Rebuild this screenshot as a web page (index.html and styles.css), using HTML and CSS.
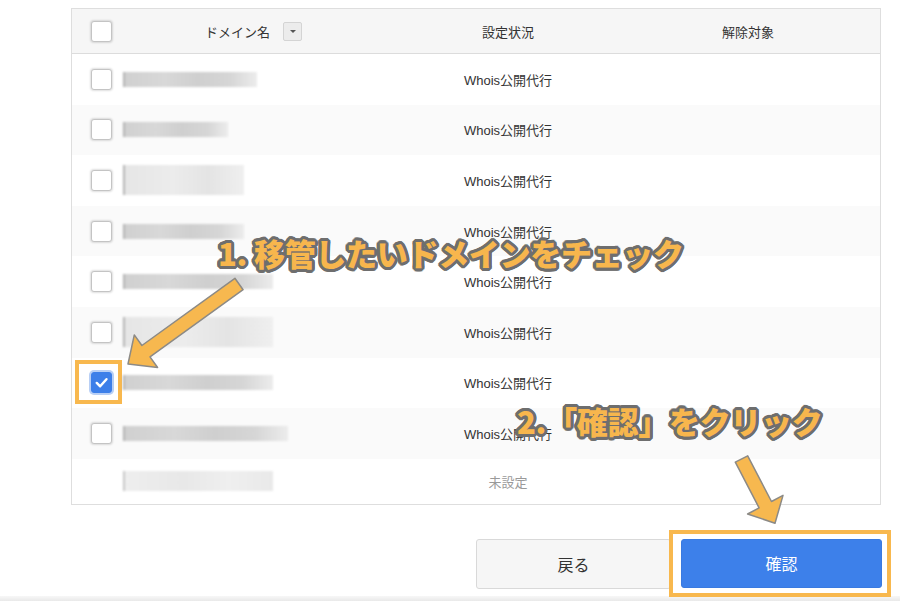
FILE: index.html
```html
<!DOCTYPE html>
<html lang="ja">
<head>
<meta charset="utf-8">
<title>ドメイン移管</title>
<link rel="stylesheet" href="styles.css">
</head>
<body>
<div class="page">
  <div class="table">
    <div class="row head">
      <div class="cell name"><span class="cb"></span><span class="label">ドメイン名</span><span class="sort"></span></div>
      <div class="cell">設定状況</div>
      <div class="cell">解除対象</div>
    </div>
    <div class="row">
      <div class="cell name"><span class="cb"></span><span class="bar b1"></span></div>
      <div class="cell">Whois公開代行</div>
      <div class="cell"></div>
    </div>
    <div class="row alt">
      <div class="cell name"><span class="cb"></span><span class="bar b2"></span></div>
      <div class="cell">Whois公開代行</div>
      <div class="cell"></div>
    </div>
    <div class="row">
      <div class="cell name"><span class="cb"></span><span class="bar b3 tall"></span></div>
      <div class="cell">Whois公開代行</div>
      <div class="cell"></div>
    </div>
    <div class="row alt">
      <div class="cell name"><span class="cb"></span><span class="bar b3"></span></div>
      <div class="cell">Whois公開代行</div>
      <div class="cell"></div>
    </div>
    <div class="row">
      <div class="cell name"><span class="cb"></span><span class="bar b5"></span></div>
      <div class="cell">Whois公開代行</div>
      <div class="cell"></div>
    </div>
    <div class="row alt">
      <div class="cell name"><span class="cb"></span><span class="bar b5 tall"></span></div>
      <div class="cell">Whois公開代行</div>
      <div class="cell"></div>
    </div>
    <div class="row">
      <div class="cell name"><span class="cb checked"><svg viewBox="0 0 20 20" class="tick"><path d="M5 10.5 L8.6 14 L15.2 6.6" /></svg><span class="hl-box"></span></span><span class="bar b5"></span></div>
      <div class="cell">Whois公開代行</div>
      <div class="cell"></div>
    </div>
    <div class="row alt">
      <div class="cell name"><span class="cb"></span><span class="bar b8"></span></div>
      <div class="cell">Whois公開代行</div>
      <div class="cell"></div>
    </div>
    <div class="row last">
      <div class="cell name"><span class="cb-space"></span><span class="bar b5 light"></span></div>
      <div class="cell muted">未設定</div>
      <div class="cell"></div>
    </div>
  </div>

  <div class="actions">
    <button class="btn back">戻る</button>
    <button class="btn confirm">確認<span class="hl-btn"></span></button>
  </div>
  <div class="strip"></div>

  <div class="note n1">1. 移管したいドメインをチェック</div>
  <div class="note n2">2.「確認」をクリック</div>

  <svg class="arrows" viewBox="0 0 900 601" width="900" height="601">
    <polygon class="arrow" points="234.9,278.3 243.1,289.7 150.0,356.9 157.6,367.5 128,364 134.3,334.9 141.9,345.5" />
    <polygon class="arrow" points="735.3,462.2 747.7,455.8 771.5,501.5 783.0,495.4 775,523.3 747.6,514.0 759.1,507.9" />
  </svg>
</div>
</body>
</html>
```

FILE: styles.css
```css
* { box-sizing: border-box; }

body {
  margin: 0;
  background: #ffffff;
  font-family: "Liberation Sans", "Noto Sans CJK JP", sans-serif;
  color: #333;
}

.page {
  position: relative;
  width: 900px;
  height: 601px;
  padding-top: 8px;
  overflow: hidden;
}

.table {
  margin-left: 71px;
  width: 810px;
  border: 1px solid #dedede;
  background: #fff;
}

.row {
  display: grid;
  grid-template-columns: 328px 216px 264px;
  height: 50.6px;
  align-items: center;
  font-size: 13px;
}

.row.alt { background: #fafafa; }

.row.head {
  height: 45px;
  background: #f6f6f6;
  border-bottom: 1px solid #dcdcdc;
}

.row.last { height: 45.2px; }

.cell {
  text-align: center;
  white-space: nowrap;
}

.cell.muted { color: #9a9a9a; }

.cell.name {
  display: flex;
  align-items: center;
  padding-left: 19px;
  text-align: left;
}

.cb, .cb-space {
  position: relative;
  flex: none;
  width: 21px;
  height: 21px;
  margin-right: 11px;
}

.cb {
  background: #fff;
  border: 1px solid #c4c4c4;
  border-radius: 3px;
  box-shadow: 0 0 2px 1px rgba(0, 0, 0, 0.13);
}

.cb.checked {
  background: #3d7fe9;
  border-color: #3d7fe9;
  box-shadow: 0 0 0 2px #b8cff5;
}

.tick {
  display: block;
  width: 19px;
  height: 19px;
}

.tick path {
  fill: none;
  stroke: #fff;
  stroke-width: 2.6;
  stroke-linecap: round;
  stroke-linejoin: round;
}

.hl-box {
  position: absolute;
  left: -17px;
  top: -13px;
  right: -11px;
  bottom: -12px;
  border: 4px solid #f8b84e;
}

.label {
  margin-left: 82px;
  font-size: 13px;
}

.sort {
  position: relative;
  width: 19px;
  height: 19px;
  margin-left: 13px;
  background: #ececec;
  border: 1px solid #d4d4d4;
  border-radius: 2px;
}

.sort::after {
  content: "";
  position: absolute;
  left: 6px;
  top: 7px;
  border-left: 3px solid transparent;
  border-right: 3px solid transparent;
  border-top: 3px solid #555;
}

.bar {
  height: 15px;
  border-left: 2px solid #b5b5b5;
  background: linear-gradient(90deg, #d0d0d0 0%, #d8d8d8 30%, #cfcfcf 55%, #d6d6d6 80%, #ececec 100%);
  filter: blur(0.8px);
}

.bar.tall {
  height: 30px;
  background: linear-gradient(90deg, #e6e6e6 0%, #ececec 40%, #e4e4e4 70%, #efefef 100%);
}

.bar.light {
  height: 20px;
  background: linear-gradient(90deg, #eeeeee 0%, #e8e8e8 40%, #efefef 70%, #e9e9e9 100%);
  border-left-color: #c8c8c8;
}

.b1 { width: 134px; }
.b2 { width: 105px; }
.b3 { width: 121px; }
.b5 { width: 150px; }
.b8 { width: 165px; }

.actions {
  display: flex;
  justify-content: flex-end;
  gap: 10px;
  margin-top: 34px;
  padding-right: 18px;
}

.btn {
  position: relative;
  height: 50px;
  border-radius: 3px;
  font-family: "Noto Sans CJK JP", "Liberation Sans", sans-serif;
  font-size: 16px;
  cursor: pointer;
}

.btn.back {
  width: 195px;
  background: #f6f6f6;
  border: 1px solid #d9d9d9;
  color: #333;
}

.btn.confirm {
  width: 201px;
  height: 49px;
  background: #3d80ea;
  border: 1px solid #3a7ae0;
  color: #fff;
}

.hl-btn {
  position: absolute;
  left: -13px;
  top: -10px;
  right: -10px;
  bottom: -10px;
  border: 4px solid #f8b84e;
}

.strip {
  height: 5px;
  margin-top: 7px;
  background: linear-gradient(180deg, #f7f7f7, #e9e9e9);
}

.note {
  position: absolute;
  line-height: 1;
  font-family: "Noto Sans CJK JP", sans-serif;
  font-size: 31px;
  font-weight: 900;
  letter-spacing: -0.3px;
  color: #f7b64d;
  white-space: nowrap;
  text-shadow:
    3px 0 0 #6e6e6e, -3px 0 0 #6e6e6e, 0 3px 0 #6e6e6e, 0 -3px 0 #6e6e6e,
    2px 2px 0 #6e6e6e, -2px 2px 0 #6e6e6e, 2px -2px 0 #6e6e6e, -2px -2px 0 #6e6e6e,
    3px 1px 0 #6e6e6e, -3px 1px 0 #6e6e6e, 3px -1px 0 #6e6e6e, -3px -1px 0 #6e6e6e,
    1px 3px 0 #6e6e6e, -1px 3px 0 #6e6e6e, 1px -3px 0 #6e6e6e, -1px -3px 0 #6e6e6e;
}

.n1 { left: 218px; top: 237px; }
.n2 { left: 517px; top: 405px; }

.arrows {
  position: absolute;
  left: 0;
  top: 0;
  pointer-events: none;
}

.arrow {
  fill: #f7b84f;
  stroke: #8c8a86;
  stroke-width: 1.5;
  stroke-linejoin: round;
}
```
